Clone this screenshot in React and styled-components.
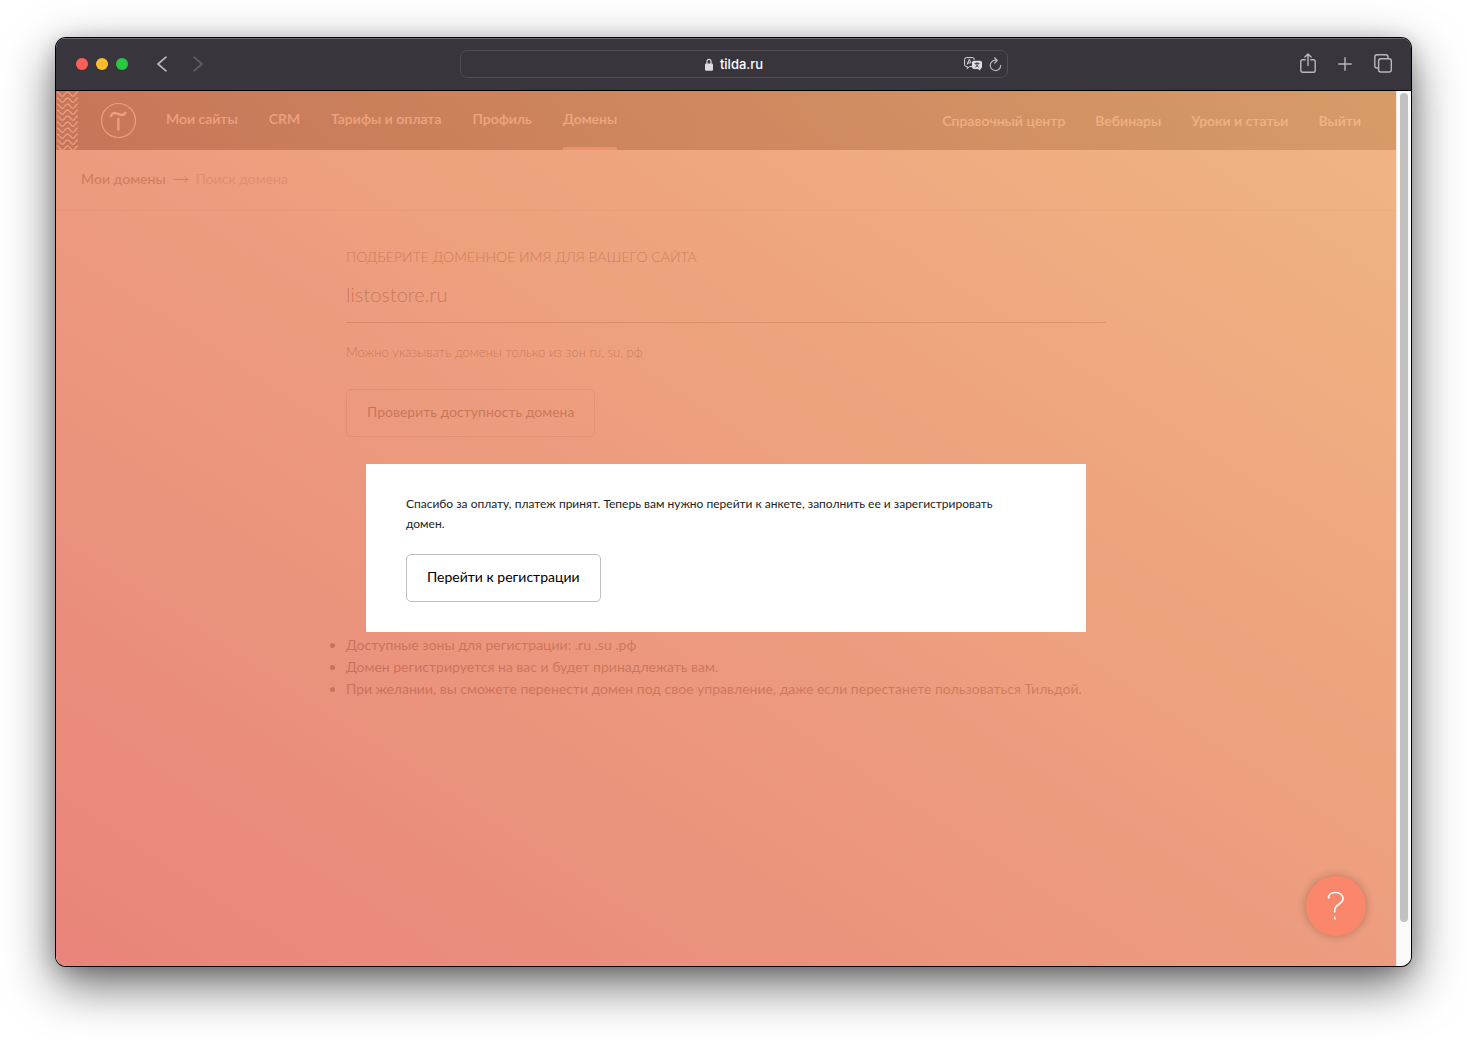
import styled, { createGlobalStyle } from "styled-components";

const GlobalStyle = createGlobalStyle`
  * {
    box-sizing: border-box;
  }
  body {
    margin: 0;
    background: #fff;
    font-family: Lato, "Open Sans", sans-serif;
    color: #000;
  }
  button,
  input {
    font-family: inherit;
    color: inherit;
  }
`;

const Desktop = styled.div`
  display: flex;
  min-height: 100vh;
  padding: 38px 56px 74px;
`;

const Window = styled.div`
  flex: 1;
  min-width: 0;
  display: flex;
  flex-direction: column;
  overflow: hidden;
  border-radius: 10px;
  background: #fafafa;
  box-shadow: 0 0 0 1px #000, 0 18px 50px rgba(0, 0, 0, 0.6), 0 4px 20px rgba(0, 0, 0, 0.2);
`;

const Toolbar = styled.div`
  display: grid;
  grid-template-columns: 1fr minmax(200px, 548px) 1fr;
  align-items: center;
  height: 53px;
  padding: 0 19px 0 20px;
  background: #39353c;
  border-bottom: 1px solid #000;
  box-shadow: inset 0 1px 0 #6b686d;
`;

const ToolbarGroup = styled.div`
  display: flex;
  align-items: center;
  justify-content: ${({ $end }) => ($end ? "flex-end" : "flex-start")};
  gap: ${({ $gap }) => $gap}px;
`;

const Dot = styled.button`
  width: 12px;
  height: 12px;
  padding: 0;
  border: none;
  border-radius: 50%;
  background: ${({ $color }) => $color};
`;

const IconButton = styled.button`
  display: flex;
  padding: 0;
  border: none;
  background: none;
  color: ${({ $dim }) => ($dim ? "#5f5c62" : "#b9b7bb")};
  cursor: pointer;
`;

const AddressBar = styled.div`
  display: grid;
  grid-template-columns: 1fr auto 1fr;
  align-items: center;
  height: 28px;
  padding: 0 5px;
  border: 1px solid #514e55;
  border-radius: 7px;
  color: #dedde0;
`;

const Address = styled.span`
  grid-column: 2;
  display: flex;
  align-items: center;
  gap: 7px;
  font: 500 13px Inter, sans-serif;
  color: #fff;
`;

const Viewport = styled.div`
  flex: 1;
  display: flex;
`;

const Page = styled.div`
  position: relative;
  flex: 1;
  min-width: 0;
  background: #fff;
`;

const ScrollTrack = styled.div`
  width: 15px;
  padding: 2px 3px 0 3px;
  background: #fafafa;
  border-left: 1px solid #e8e8e8;
`;

const ScrollThumb = styled.div`
  height: 95%;
  border-radius: 4px;
  background: #c1c1c1;
`;

const Header = styled.header`
  display: flex;
  align-items: stretch;
  height: 59px;
  padding-right: 35px;
  background: linear-gradient(to right, #000, #505050);
  color: #fff;
`;

const LogoLink = styled.a`
  display: flex;
  align-items: center;
  margin: 0 29px 0 22px;
  color: inherit;
`;

const Nav = styled.nav`
  display: flex;
  gap: ${({ $right }) => ($right ? "30px" : "31px")};
  margin-left: ${({ $right }) => ($right ? "auto" : "0")};
  padding-top: ${({ $right }) => ($right ? "4px" : "0")};
`;

const NavLink = styled.a`
  display: flex;
  align-items: center;
  padding-bottom: 2px;
  border-bottom: 3px solid ${({ $active }) => ($active ? "#fa8669" : "transparent")};
  font-size: 14px;
  font-weight: 600;
  white-space: nowrap;
  text-decoration: none;
  color: inherit;
`;

const Breadcrumbs = styled.nav`
  display: flex;
  align-items: center;
  gap: 7px;
  height: 61px;
  padding: 0 25px 3px;
  border-bottom: 1px solid #e0e0e0;
  font-size: 14px;
  color: #999;

  a {
    font-weight: 600;
    text-decoration: none;
    color: #444;
  }
`;

const Content = styled.main`
  width: 100%;
  max-width: 760px;
  margin: 0 auto;
  padding: 36px 0;
`;

const Form = styled.form`
  display: flex;
  flex-direction: column;
  align-items: flex-start;
`;

const Label = styled.label`
  font-size: 14px;
  font-weight: 300;
  line-height: 20px;
  text-transform: uppercase;
`;

const DomainInput = styled.input`
  width: 100%;
  height: 56px;
  padding: 0 0 2px;
  border: none;
  border-bottom: 1px solid #777;
  background: none;
  font-size: 20px;
  font-weight: 300;
  outline: none;
`;

const Hint = styled.p`
  margin: 19px 0 27px;
  font-size: 13px;
  font-weight: 300;
  line-height: 20px;
`;

const OutlineButton = styled.button`
  height: 48px;
  padding: 0 20px 3px;
  border: 1px solid ${({ $faint }) => ($faint ? "#bbb" : "#bfbfbf")};
  border-radius: 5px;
  background: none;
  font-size: 14px;
  cursor: pointer;
`;

const Notes = styled.ul`
  margin: 197px 0 0;
  padding: 0;
  font-size: 14px;
  line-height: 22px;
  color: #222;
`;

const Overlay = styled.div`
  position: absolute;
  inset: 0;
  display: flex;
  align-items: center;
  justify-content: center;
  padding-top: 38px;
  background: linear-gradient(to top right, rgba(229, 111, 99, 0.85), rgba(238, 169, 108, 0.85));
`;

const Dialog = styled.div`
  width: 100%;
  max-width: 720px;
  padding: 30px 40px;
  background: #fff;
`;

const Message = styled.p`
  max-width: 620px;
  margin: 0 0 20px;
  font-size: 12px;
  line-height: 20px;
  color: #222;
`;

const HelpButton = styled.button`
  position: absolute;
  right: 30px;
  bottom: 30px;
  display: flex;
  align-items: center;
  justify-content: center;
  width: 60px;
  height: 60px;
  padding: 0;
  border: none;
  border-radius: 50%;
  background: #fa876b;
  color: #fff;
  box-shadow: 0 0 8px rgba(0, 0, 0, 0.25);
`;

const MENU = ["Мои сайты", "CRM", "Тарифы и оплата", "Профиль", "Домены"];
const HELP_MENU = ["Справочный центр", "Вебинары", "Уроки и статьи", "Выйти"];

const Chevron = ({ left }) => (
  <svg width="10" height="16" fill="none" stroke="currentColor" strokeWidth="1.7" strokeLinecap="round" strokeLinejoin="round">
    <path d={left ? "M9 1.2 1 8l8 6.8" : "M1 1.2 9 8l-8 6.8"} />
  </svg>
);

const LockIcon = () => (
  <svg width="8" height="13">
    <path d="M2 6V3.4a2 2 0 0 1 4 0V6" fill="none" stroke="#dedde0" strokeWidth="1.2" />
    <rect y="5.6" width="8" height="7.2" rx="1.2" fill="#dedde0" />
  </svg>
);

const TranslateIcon = () => (
  <svg width="19" height="14" fill="none" stroke="#dedde0">
    <path d="M8 9.5H5.5L3.3 11.7V9.5H2.4A1.8 1.8 0 0 1 .6 7.7V2.4A1.8 1.8 0 0 1 2.4.6h6a1.8 1.8 0 0 1 1.8 1.8V3" />
    <path d="M3 7.6 5.3 2.4 7 6M3.8 6h2.6" />
    <path
      d="M9.8 3.8h6.4A1.8 1.8 0 0 1 18 5.6v4.5a1.8 1.8 0 0 1-1.8 1.8v1.9L14 11.9H9.8A1.8 1.8 0 0 1 8 10.1V5.6a1.8 1.8 0 0 1 1.8-1.8Z"
      fill="#dedde0"
      stroke="none"
    />
    <path d="M10.6 6.4h4.9M13 5.2v1.2M11.2 10.2c1.7-.7 2.7-2 3.1-3.7M11.8 6.6c.4 1.7 1.4 2.9 3 3.6" stroke="#39353c" strokeWidth=".9" />
  </svg>
);

const ReloadIcon = () => (
  <svg width="13" height="15" fill="none" stroke="currentColor" strokeWidth="1.2" strokeLinecap="round" strokeLinejoin="round">
    <path d="M11.7 8.4A5.2 5.2 0 1 1 7.8 3.3M5.6.8 8.3 3.4 5.8 6" />
  </svg>
);

const ShareIcon = () => (
  <svg width="16" height="22" fill="none" stroke="currentColor" strokeWidth="1.4" strokeLinecap="round" strokeLinejoin="round">
    <path d="M5.2 6.8H2.6A1.8 1.8 0 0 0 .8 8.6v8.9a1.8 1.8 0 0 0 1.8 1.8h10.8a1.8 1.8 0 0 0 1.8-1.8V8.6a1.8 1.8 0 0 0-1.8-1.8h-2.6M8 12.6V1M4.900 4 8 .9 11.1 4" />
  </svg>
);

const PlusIcon = () => (
  <svg width="14" height="14" fill="none" stroke="currentColor" strokeWidth="1.4" strokeLinecap="round">
    <path d="M7 .8v12.400M.8 7h12.400" />
  </svg>
);

const TabsIcon = () => (
  <svg width="18" height="20" fill="none" stroke="currentColor" strokeWidth="1.4">
    <path d="M4.4 14H3a2.2 2.2 0 0 1-2.2-2.2V3A2.2 2.2 0 0 1 3 .8h8.8A2.2 2.2 0 0 1 14 3v1.6" />
    <rect x="4.6" y="4.8" width="12.700" height="13.2" rx="2.2" />
  </svg>
);

const Waves = () => (
  <svg width="22" height="59" fill="none" stroke="#fff" strokeWidth="1.3" aria-hidden="true">
    {[0, 1, 2, 3, 4, 5, 6, 7, 8, 9].map((row) => (
      <path
        key={row}
        d="M1 1c2.600 0 3.200 4.400 5.300 4.400S9 1 11.600 1s3.200 4.400 5.300 4.400S19.400 1 22 1"
        transform={`translate(0 ${row * 6})`}
      />
    ))}
  </svg>
);

const Logo = () => (
  <svg width="37" height="37" fill="none" stroke="currentColor">
    <circle cx="18.5" cy="18.5" r="17" strokeWidth="1.2" />
    <path d="M10.800 14.8c.4-3.400 3.200-4.600 6.400-3.100 3.600 1.700 7.400 2.200 8.400-1.800M18.4 16v12.500" strokeWidth="2.4" />
  </svg>
);

const App = () => {
  return (
    <>
      <GlobalStyle />
      <Desktop>
        <Window>
          <Toolbar>
            <ToolbarGroup $gap={29}>
              <ToolbarGroup $gap={8}>
                <Dot $color="#ff5f57" aria-label="Close" />
                <Dot $color="#febc2e" aria-label="Minimize" />
                <Dot $color="#28c840" aria-label="Zoom" />
              </ToolbarGroup>
              <ToolbarGroup $gap={26}>
                <IconButton aria-label="Back"><Chevron left /></IconButton>
                <IconButton $dim aria-label="Forward"><Chevron /></IconButton>
              </ToolbarGroup>
            </ToolbarGroup>
            <AddressBar>
              <Address><LockIcon />tilda.ru</Address>
              <ToolbarGroup $end $gap={6}>
                <IconButton aria-label="Translate"><TranslateIcon /></IconButton>
                <IconButton aria-label="Reload"><ReloadIcon /></IconButton>
              </ToolbarGroup>
            </AddressBar>
            <ToolbarGroup $end $gap={22}>
              <IconButton aria-label="Share"><ShareIcon /></IconButton>
              <IconButton aria-label="New tab"><PlusIcon /></IconButton>
              <IconButton aria-label="Tabs"><TabsIcon /></IconButton>
            </ToolbarGroup>
          </Toolbar>
          <Viewport>
            <Page>
              <Header>
                <Waves />
                <LogoLink href="#" aria-label="Tilda"><Logo /></LogoLink>
                <Nav>
                  {MENU.map((item) => (
                    <NavLink href="#" key={item} $active={item === "Домены"}>{item}</NavLink>
                  ))}
                </Nav>
                <Nav $right>
                  {HELP_MENU.map((item) => (
                    <NavLink href="#" key={item}>{item}</NavLink>
                  ))}
                </Nav>
              </Header>
              <Breadcrumbs>
                <a href="#">Мои домены</a>
                <svg width="16" height="8" fill="none" stroke="#444">
                  <path d="M0 4.5h15M11.5 1.5l3.500 3-3.500 3" />
                </svg>
                <span>Поиск домена</span>
              </Breadcrumbs>
              <Content>
                <Form onSubmit={(e) => e.preventDefault()}>
                  <Label htmlFor="domain">Подберите доменное имя для вашего сайта</Label>
                  <DomainInput id="domain" defaultValue="listostore.ru" />
                  <Hint>Можно указывать домены только из зон ru, su, рф</Hint>
                  <OutlineButton $faint>Проверить доступность домена</OutlineButton>
                </Form>
                <Notes>
                  <li>Доступные зоны для регистрации: .ru .su .рф</li>
                  <li>Домен регистрируется на вас и будет принадлежать вам.</li>
                  <li>При желании, вы сможете перенести домен под свое управление, даже если перестанете пользоваться Тильдой.</li>
                </Notes>
              </Content>
              <Overlay>
                <Dialog role="dialog">
                  <Message>
                    Спасибо за оплату, платеж принят. Теперь вам нужно перейти к анкете, заполнить ее и зарегистрировать домен.
                  </Message>
                  <OutlineButton>Перейти к регистрации</OutlineButton>
                </Dialog>
              </Overlay>
              <HelpButton aria-label="Помощь">
                <svg width="18" height="30" fill="none" stroke="currentColor" strokeWidth="1.6">
                  <path d="M1.5 7.5C1.5 3.5 4.5 1.5 8.5 1.5s7.5 2.2 7.5 6.2c0 5.8-8.3 5.3-8.3 11.3v2.5M7.7 25.5v3" />
                </svg>
              </HelpButton>
            </Page>
            <ScrollTrack>
              <ScrollThumb />
            </ScrollTrack>
          </Viewport>
        </Window>
      </Desktop>
    </>
  );
};

export default App;
